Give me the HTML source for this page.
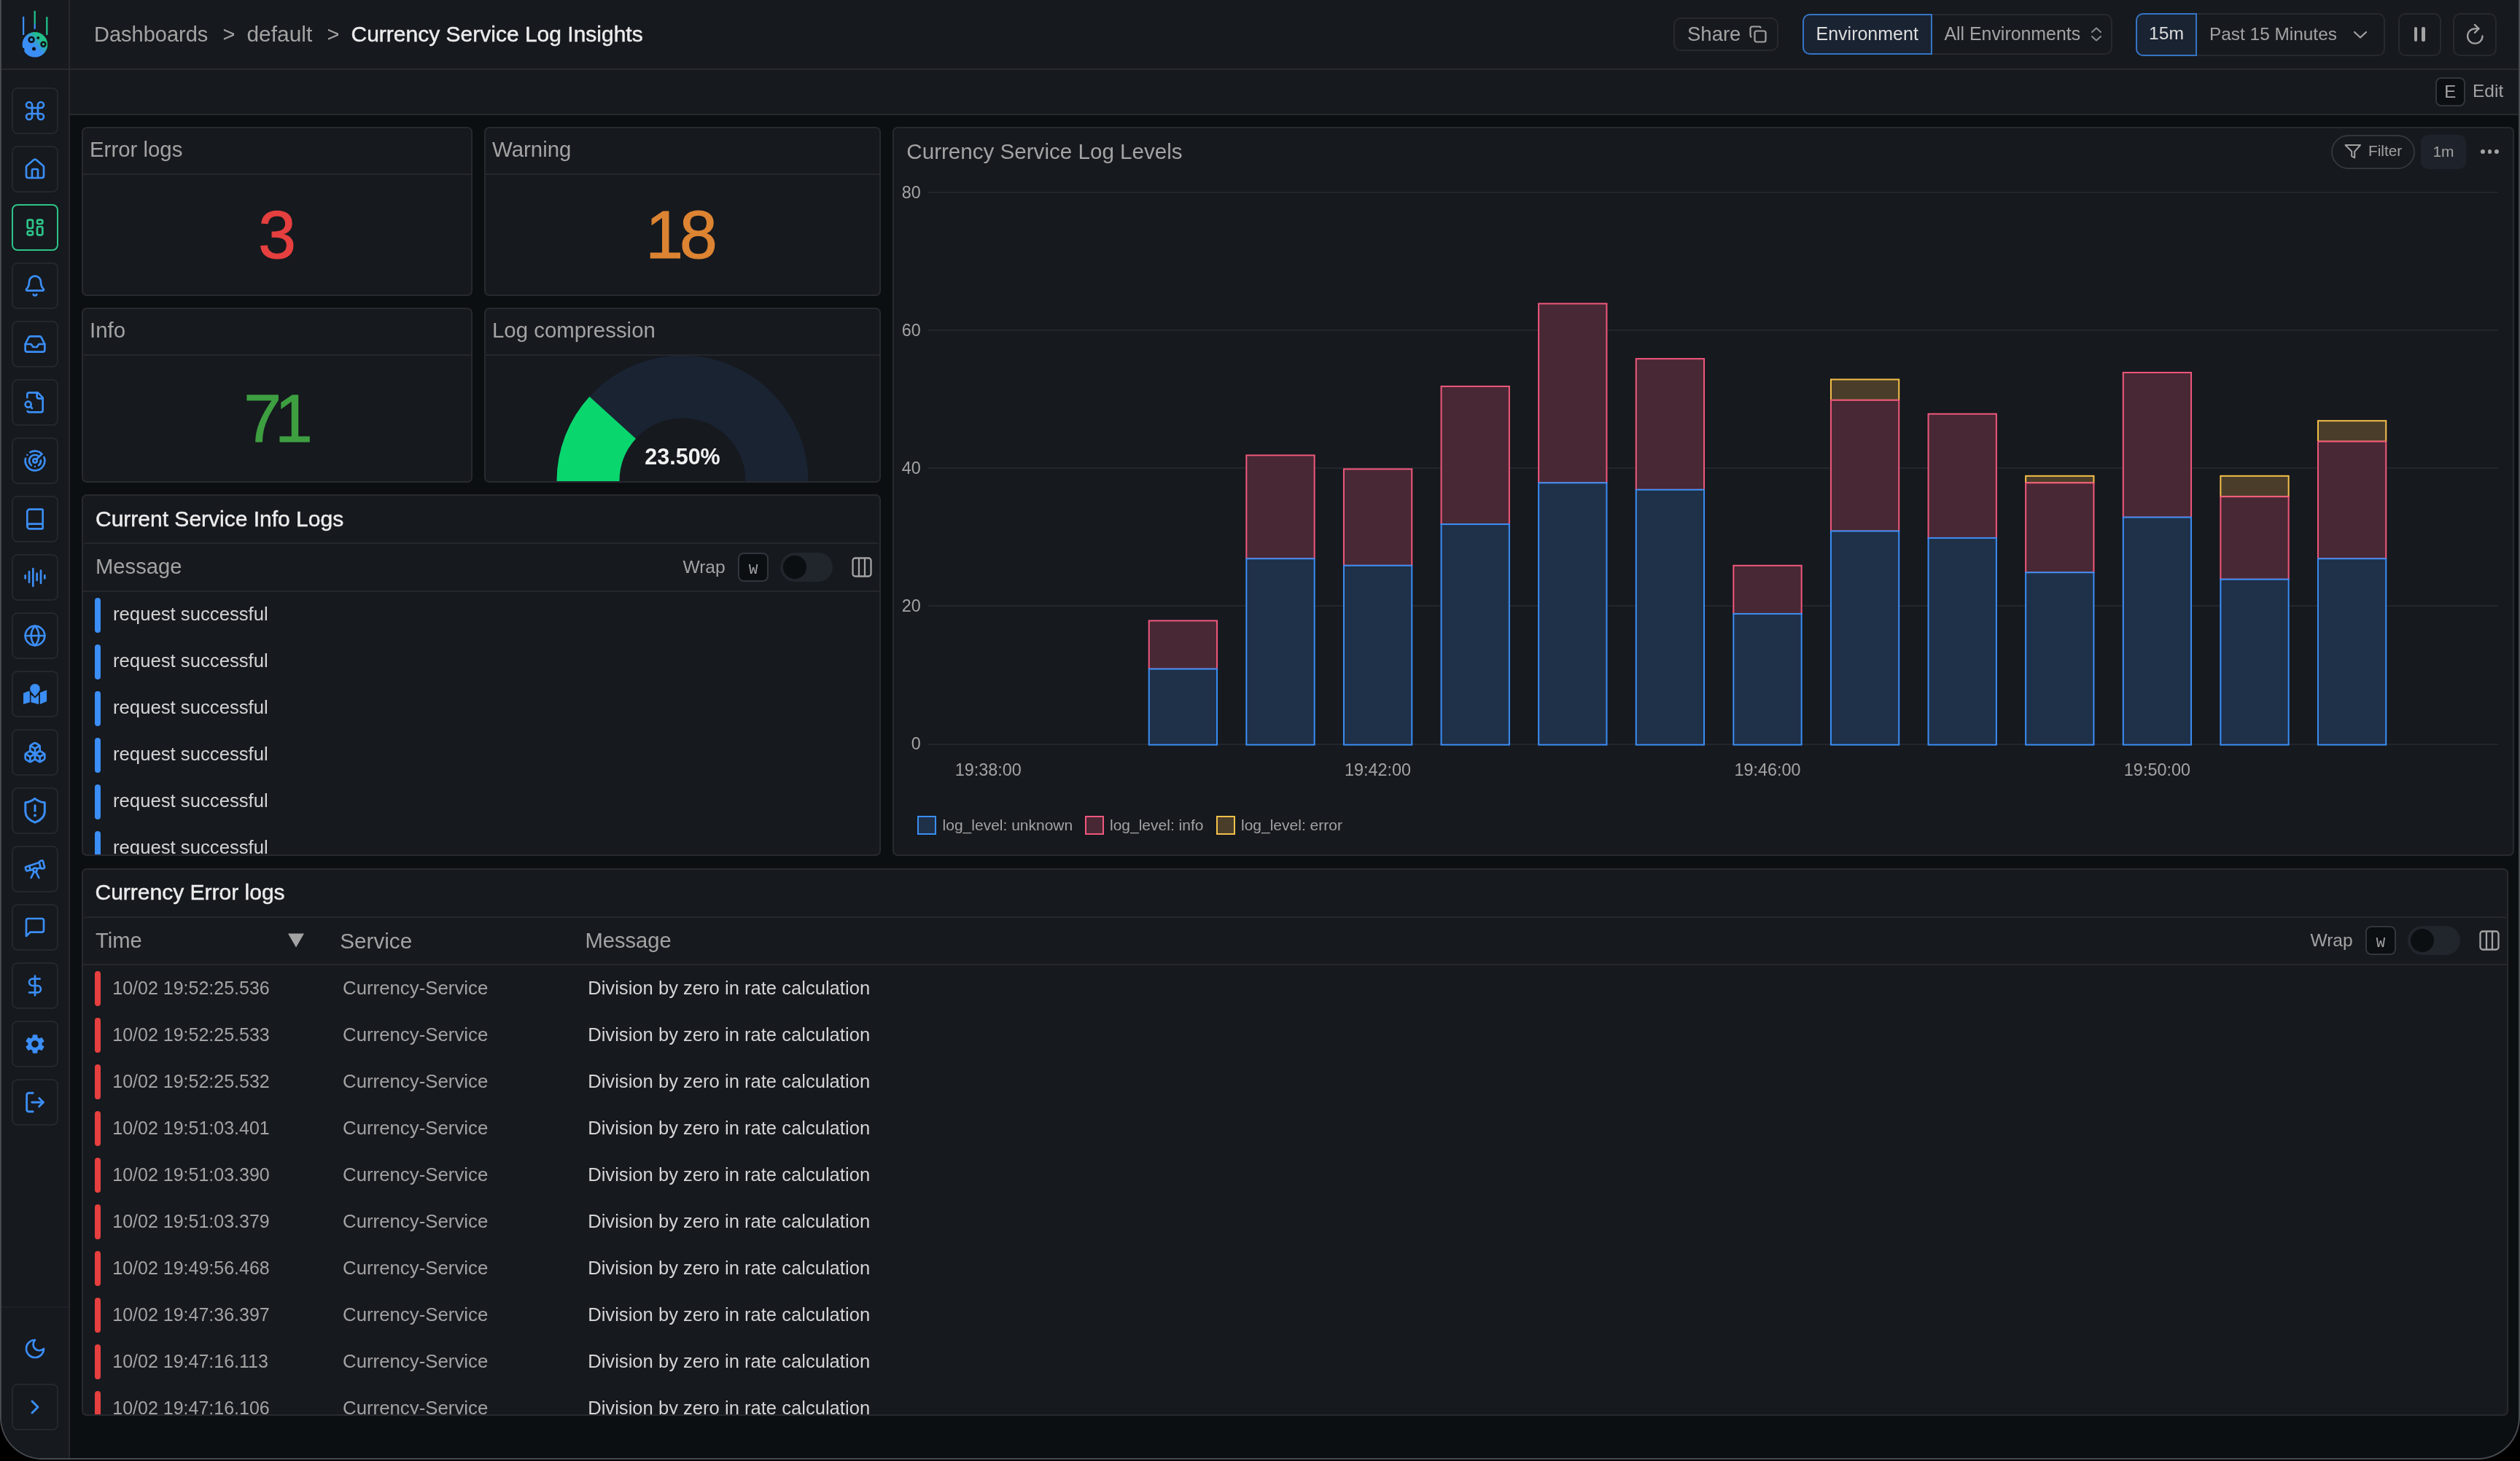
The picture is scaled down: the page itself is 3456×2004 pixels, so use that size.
<!DOCTYPE html>
<html><head><meta charset="utf-8"><title>Currency Service Log Insights</title>
<style>
html,body{margin:0;padding:0;width:3456px;height:2004px;overflow:hidden;background:#000;}
body{position:relative;font-family:"Liberation Sans",sans-serif;}
div,svg{box-sizing:content-box;}
</style></head><body>
<div style="position:absolute;left:0;top:-60px;width:3456px;height:2062px;box-sizing:border-box;border:2px solid #46494e;border-top:none;border-radius:0 0 58px 58px;overflow:hidden;background:#0b0f12;"><div style="position:absolute;left:-2px;top:60px;width:3456px;height:2004px;will-change:transform;"><div style="position:absolute;left:0px;top:0px;width:96px;height:2004px;background:#16191e;border-right:2px solid #27292e;box-sizing:border-box;"></div><div style="position:absolute;left:96px;top:0px;width:3360px;height:96px;background:#16191e;"></div><div style="position:absolute;left:0px;top:94px;width:3456px;height:2px;background:#27292e;"></div><div style="position:absolute;left:96px;top:96px;width:3360px;height:62px;background:#16191e;"></div><div style="position:absolute;left:96px;top:156px;width:3360px;height:2px;background:#27292e;"></div><svg style="position:absolute;left:20px;top:10px;" width="56" height="72" viewBox="0 0 56 72">
<defs>
 <linearGradient id="lg" gradientUnits="userSpaceOnUse" x1="12" y1="66" x2="44" y2="36">
  <stop offset="0.45" stop-color="#3b8ef5"/><stop offset="0.62" stop-color="#2fa4c0"/><stop offset="0.75" stop-color="#21c08a"/>
 </linearGradient>
 <linearGradient id="ln2" gradientUnits="userSpaceOnUse" x1="0" y1="5" x2="0" y2="30"><stop offset="0.68" stop-color="#21c08a"/><stop offset="0.74" stop-color="#3b8ef5"/></linearGradient>
</defs>
<line x1="12.1" y1="12.8" x2="12.1" y2="38" stroke="#3b8ef5" stroke-width="2.3"/>
<line x1="27.7" y1="4.9" x2="27.7" y2="29.8" stroke="url(#ln2)" stroke-width="2.3"/>
<line x1="44.3" y1="13.1" x2="44.3" y2="38" stroke="#21c08a" stroke-width="2.3"/>
<circle cx="27.9" cy="51.2" r="17.3" fill="url(#lg)"/>
<circle cx="23.1" cy="44.4" r="3.4" fill="none" stroke="#111" stroke-width="2.6"/>
<circle cx="32.3" cy="41.9" r="1.9" fill="#111"/>
<circle cx="39.5" cy="50.8" r="3.0" fill="none" stroke="#111" stroke-width="2.4"/>
<circle cx="26.5" cy="57" r="2.5" fill="#111"/>
<circle cx="11" cy="58" r="2.6" fill="#16191e"/>
</svg><div style="position:absolute;left:16px;top:120px;width:64px;height:64px;border:2px solid #24272c;border-radius:8px;box-sizing:border-box;"></div><svg style="position:absolute;left:32.0px;top:136.0px;color:#3b8ef5" width="32" height="32" viewBox="0 0 24 24" fill="none" stroke="#3b8ef5" stroke-width="2" stroke-linecap="round" stroke-linejoin="round"><path d="M15 6v12a3 3 0 1 0 3-3H6a3 3 0 1 0 3 3V6a3 3 0 1 0-3 3h12a3 3 0 1 0-3-3"/></svg><div style="position:absolute;left:16px;top:200px;width:64px;height:64px;border:2px solid #24272c;border-radius:8px;box-sizing:border-box;"></div><svg style="position:absolute;left:32.0px;top:216.0px;color:#3b8ef5" width="32" height="32" viewBox="0 0 24 24" fill="none" stroke="#3b8ef5" stroke-width="2" stroke-linecap="round" stroke-linejoin="round"><path d="M15 21v-8a1 1 0 0 0-1-1h-4a1 1 0 0 0-1 1v8"/><path d="M3 10a2 2 0 0 1 .709-1.528l7-5.999a2 2 0 0 1 2.582 0l7 5.999A2 2 0 0 1 21 10v9a2 2 0 0 1-2 2H5a2 2 0 0 1-2-2z"/></svg><div style="position:absolute;left:16px;top:280px;width:64px;height:64px;border:2px solid #2ec48a;border-radius:8px;box-sizing:border-box;"></div><svg style="position:absolute;left:32.0px;top:296.0px;color:#2ec48a" width="32" height="32" viewBox="0 0 24 24" fill="none" stroke="#2ec48a" stroke-width="2" stroke-linecap="round" stroke-linejoin="round"><rect width="5.5" height="8.5" x="4.25" y="4.25" rx="1.5"/><rect width="5.5" height="4" x="14.25" y="4.25" rx="1.5"/><rect width="5.5" height="8.5" x="14.25" y="11.25" rx="1.5"/><rect width="5.5" height="4" x="4.25" y="15.75" rx="1.5"/></svg><div style="position:absolute;left:16px;top:360px;width:64px;height:64px;border:2px solid #24272c;border-radius:8px;box-sizing:border-box;"></div><svg style="position:absolute;left:32.0px;top:376.0px;color:#3b8ef5" width="32" height="32" viewBox="0 0 24 24" fill="none" stroke="#3b8ef5" stroke-width="2" stroke-linecap="round" stroke-linejoin="round"><path d="M10.268 21a2 2 0 0 0 3.464 0"/><path d="M3.262 15.326A1 1 0 0 0 4 17h16a1 1 0 0 0 .74-1.673C19.41 13.956 18 12.499 18 8A6 6 0 0 0 6 8c0 4.499-1.411 5.956-2.738 7.326"/></svg><div style="position:absolute;left:16px;top:440px;width:64px;height:64px;border:2px solid #24272c;border-radius:8px;box-sizing:border-box;"></div><svg style="position:absolute;left:32.0px;top:456.0px;color:#3b8ef5" width="32" height="32" viewBox="0 0 24 24" fill="none" stroke="#3b8ef5" stroke-width="2" stroke-linecap="round" stroke-linejoin="round"><polyline points="22 12 16 12 14 15 10 15 8 12 2 12"/><path d="M5.45 5.11 2 12v6a2 2 0 0 0 2 2h16a2 2 0 0 0 2-2v-6l-3.45-6.89A2 2 0 0 0 16.76 4H7.24a2 2 0 0 0-1.79 1.11z"/></svg><div style="position:absolute;left:16px;top:520px;width:64px;height:64px;border:2px solid #24272c;border-radius:8px;box-sizing:border-box;"></div><svg style="position:absolute;left:32.0px;top:536.0px;color:#3b8ef5" width="32" height="32" viewBox="0 0 24 24" fill="none" stroke="#3b8ef5" stroke-width="2" stroke-linecap="round" stroke-linejoin="round"><path d="M14 2v4a2 2 0 0 0 2 2h4"/><path d="M4.268 21a2 2 0 0 0 1.727 1H18a2 2 0 0 0 2-2V7l-5-5H6a2 2 0 0 0-2 2v3"/><path d="m9 18-1.5-1.5"/><circle cx="5" cy="14" r="3"/></svg><div style="position:absolute;left:16px;top:600px;width:64px;height:64px;border:2px solid #24272c;border-radius:8px;box-sizing:border-box;"></div><svg style="position:absolute;left:32.0px;top:616.0px;color:#3b8ef5" width="32" height="32" viewBox="0 0 24 24" fill="none" stroke="#3b8ef5" stroke-width="2" stroke-linecap="round" stroke-linejoin="round"><path d="M19.07 4.93A10 10 0 0 0 6.99 3.34"/><path d="M4 6h.01"/><path d="M2.29 9.62A10 10 0 1 0 21.31 8.35"/><path d="M16.24 7.76A6 6 0 1 0 8.23 16.67"/><path d="M12 18h.01"/><path d="M17.99 11.66A6 6 0 0 1 15.77 16.67"/><circle cx="12" cy="12" r="2"/><path d="m13.41 10.59 5.66-5.66"/></svg><div style="position:absolute;left:16px;top:680px;width:64px;height:64px;border:2px solid #24272c;border-radius:8px;box-sizing:border-box;"></div><svg style="position:absolute;left:32.0px;top:696.0px;color:#3b8ef5" width="32" height="32" viewBox="0 0 24 24" fill="none" stroke="#3b8ef5" stroke-width="2" stroke-linecap="round" stroke-linejoin="round"><path d="M4 19.5v-15A2.5 2.5 0 0 1 6.5 2H19a1 1 0 0 1 1 1v18a1 1 0 0 1-1 1H6.5a1 1 0 0 1 0-5H20"/></svg><div style="position:absolute;left:16px;top:760px;width:64px;height:64px;border:2px solid #24272c;border-radius:8px;box-sizing:border-box;"></div><svg style="position:absolute;left:32.0px;top:776.0px;color:#3b8ef5" width="32" height="32" viewBox="0 0 24 24" fill="none" stroke="#3b8ef5" stroke-width="2" stroke-linecap="round" stroke-linejoin="round"><path d="M2 10v3"/><path d="M6 6v11"/><path d="M10 3v18"/><path d="M14 8v7"/><path d="M18 5v13"/><path d="M22 10v3"/></svg><div style="position:absolute;left:16px;top:840px;width:64px;height:64px;border:2px solid #24272c;border-radius:8px;box-sizing:border-box;"></div><svg style="position:absolute;left:32.0px;top:856.0px;color:#3b8ef5" width="32" height="32" viewBox="0 0 24 24" fill="none" stroke="#3b8ef5" stroke-width="2" stroke-linecap="round" stroke-linejoin="round"><circle cx="12" cy="12" r="10"/><path d="M12 2a14.5 14.5 0 0 0 0 20 14.5 14.5 0 0 0 0-20"/><path d="M2 12h20"/></svg><div style="position:absolute;left:16px;top:920px;width:64px;height:64px;border:2px solid #24272c;border-radius:8px;box-sizing:border-box;"></div><svg style="position:absolute;left:24px;top:928px;" width="48" height="48" viewBox="0 0 48 48"><g fill="#3b8ef5"><path d="M8.05 22.7 L16.9 19.2 L16.9 35.3 L8.05 38.1 Z"/><path d="M18.4 25 L24.3 28.9 L29.1 25 L29.1 38.1 L18.4 35.2 Z"/><path d="M30.9 22 L40.1 18.6 L40.1 34 L30.9 38.1 Z"/><path d="M18.3 21.8 A7.6 7.6 0 1 1 29.7 21.8 L24 28.6 Z" stroke="#16191e" stroke-width="1.6"/></g></svg><div style="position:absolute;left:16px;top:1000px;width:64px;height:64px;border:2px solid #24272c;border-radius:8px;box-sizing:border-box;"></div><svg style="position:absolute;left:32.0px;top:1016.0px;color:#3b8ef5" width="32" height="32" viewBox="0 0 24 24" fill="none" stroke="#3b8ef5" stroke-width="2" stroke-linecap="round" stroke-linejoin="round"><path d="M2.97 12.92A2 2 0 0 0 2 14.63v3.24a2 2 0 0 0 .97 1.71l3 1.8a2 2 0 0 0 2.06 0L12 19v-5.5l-5-3-4.03 2.42Z"/><path d="m7 16.5-4.74-2.85"/><path d="m7 16.5 5-3"/><path d="M7 16.5v5.17"/><path d="M12 13.5V19l3.97 2.38a2 2 0 0 0 2.06 0l3-1.8a2 2 0 0 0 .97-1.71v-3.24a2 2 0 0 0-.97-1.71L17 10.5l-5 3Z"/><path d="m17 16.5-5-3"/><path d="m17 16.5 4.74-2.85"/><path d="M17 16.5v5.17"/><path d="M7.97 4.42A2 2 0 0 0 7 6.13v4.37l5 3 5-3V6.13a2 2 0 0 0-.97-1.71l-3-1.8a2 2 0 0 0-2.06 0l-3 1.8Z"/><path d="M12 8 7.26 5.15"/><path d="m12 8 4.74-2.85"/><path d="M12 13.5V8"/></svg><div style="position:absolute;left:16px;top:1080px;width:64px;height:64px;border:2px solid #24272c;border-radius:8px;box-sizing:border-box;"></div><svg style="position:absolute;left:24px;top:1088px;" width="48" height="48" viewBox="0 0 48 48"><g fill="none" stroke="#3b8ef5" stroke-width="3" stroke-linecap="round" stroke-linejoin="round"><path d="M23.65 7.4 Q17.5 12.4 10.84 12.8 L10.84 26 Q11.5 35.5 24 40.2 Q36.5 35.5 37.3 26 L37.3 12.8 Q30.3 12.4 23.65 7.4 Z"/><path d="M24 16.8 V24.3"/></g><circle cx="24" cy="30.5" r="1.9" fill="#3b8ef5"/></svg><div style="position:absolute;left:16px;top:1160px;width:64px;height:64px;border:2px solid #24272c;border-radius:8px;box-sizing:border-box;"></div><svg style="position:absolute;left:32.0px;top:1176.0px;color:#3b8ef5" width="32" height="32" viewBox="0 0 24 24" fill="none" stroke="#3b8ef5" stroke-width="2" stroke-linecap="round" stroke-linejoin="round"><path d="m10.065 12.493-6.18 1.318a.934.934 0 0 1-1.108-.702l-.537-2.15a1.07 1.07 0 0 1 .691-1.265l13.504-4.44"/><path d="m13.56 11.747 4.332-.924"/><path d="m16 21-3.105-6.21"/><path d="M16.485 5.94a2 2 0 0 1 1.455-2.425l1.09-.272a1 1 0 0 1 1.212.727l1.515 6.06a1 1 0 0 1-.727 1.213l-1.09.272a2 2 0 0 1-2.425-1.455z"/><path d="m6.158 8.633 1.114 4.456"/><path d="m8 21 3.105-6.21"/><circle cx="12" cy="13" r="2"/></svg><div style="position:absolute;left:16px;top:1240px;width:64px;height:64px;border:2px solid #24272c;border-radius:8px;box-sizing:border-box;"></div><svg style="position:absolute;left:32.0px;top:1256.0px;color:#3b8ef5" width="32" height="32" viewBox="0 0 24 24" fill="none" stroke="#3b8ef5" stroke-width="2" stroke-linecap="round" stroke-linejoin="round"><path d="M21 15a2 2 0 0 1-2 2H7l-4 4V5a2 2 0 0 1 2-2h14a2 2 0 0 1 2 2z"/></svg><div style="position:absolute;left:16px;top:1320px;width:64px;height:64px;border:2px solid #24272c;border-radius:8px;box-sizing:border-box;"></div><svg style="position:absolute;left:32.0px;top:1336.0px;color:#3b8ef5" width="32" height="32" viewBox="0 0 24 24" fill="none" stroke="#3b8ef5" stroke-width="2" stroke-linecap="round" stroke-linejoin="round"><line x1="12" x2="12" y1="2" y2="22"/><path d="M17 5H9.5a3.5 3.5 0 0 0 0 7h5a3.5 3.5 0 0 1 0 7H6"/></svg><div style="position:absolute;left:16px;top:1400px;width:64px;height:64px;border:2px solid #24272c;border-radius:8px;box-sizing:border-box;"></div><svg style="position:absolute;left:32.0px;top:1416.0px;color:#3b8ef5" width="32" height="32" viewBox="0 0 24 24" fill="none" stroke="#3b8ef5" stroke-width="2" stroke-linecap="round" stroke-linejoin="round"><path fill="currentColor" stroke="none" d="M19.14 12.94c.04-.3.06-.61.06-.94 0-.32-.02-.64-.07-.94l2.03-1.58a.49.49 0 0 0 .12-.61l-1.92-3.32a.488.488 0 0 0-.59-.22l-2.39.96c-.5-.38-1.03-.7-1.62-.94l-.36-2.54a.484.484 0 0 0-.48-.41h-3.84c-.24 0-.43.17-.47.41l-.36 2.54c-.59.24-1.13.57-1.62.94l-2.39-.96c-.22-.08-.47 0-.59.22L2.74 8.87c-.12.21-.08.47.12.61l2.03 1.58c-.05.3-.09.63-.09.94s.02.64.07.94l-2.03 1.58a.49.49 0 0 0-.12.61l1.92 3.32c.12.22.37.29.59.22l2.39-.96c.5.38 1.03.7 1.62.94l.36 2.54c.05.24.24.41.48.41h3.84c.24 0 .44-.17.47-.41l.36-2.54c.59-.24 1.13-.56 1.62-.94l2.39.96c.22.08.47 0 .59-.22l1.92-3.32c.12-.22.07-.47-.12-.61l-2.01-1.58zM12 15.6c-1.98 0-3.6-1.62-3.6-3.6s1.62-3.6 3.6-3.6 3.6 1.62 3.6 3.6-1.62 3.6-3.6 3.6z"/></svg><div style="position:absolute;left:16px;top:1480px;width:64px;height:64px;border:2px solid #24272c;border-radius:8px;box-sizing:border-box;"></div><svg style="position:absolute;left:31.0px;top:1495.0px;color:#3b8ef5" width="34" height="34" viewBox="0 0 24 24" fill="none" stroke="#3b8ef5" stroke-width="2" stroke-linecap="round" stroke-linejoin="round"><path d="M10 3H6a2 2 0 0 0-2 2v14c0 1.1.9 2 2 2h4"/><path d="M20 12H9"/><path d="m16 16 4-4-4-4"/></svg><div style="position:absolute;left:2px;top:1792px;width:92px;height:2px;background:#1d2026;"></div><svg style="position:absolute;left:32.0px;top:1834.0px;color:#3b8ef5" width="32" height="32" viewBox="0 0 24 24" fill="none" stroke="#3b8ef5" stroke-width="2" stroke-linecap="round" stroke-linejoin="round"><path d="M12 3a6 6 0 0 0 9 9 9 9 0 1 1-9-9Z"/></svg><div style="position:absolute;left:16px;top:1898px;width:64px;height:64px;border:2px solid #24272c;border-radius:8px;box-sizing:border-box;"></div><svg style="position:absolute;left:32.0px;top:1914.0px;color:#3b8ef5" width="32" height="32" viewBox="0 0 24 24" fill="none" stroke="#3b8ef5" stroke-width="2.2" stroke-linecap="round" stroke-linejoin="round"><path d="m9 18 6-6-6-6"/></svg><div style="position:absolute;top:33.05px;font-size:29px;line-height:29px;color:#a3a3a3;font-weight:400;white-space:pre;left:129px;">Dashboards</div><div style="position:absolute;top:33.05px;font-size:29px;line-height:29px;color:#a3a3a3;font-weight:400;white-space:pre;left:305.5px;">&gt;</div><div style="position:absolute;top:32.29px;font-size:29.9px;line-height:29.9px;color:#a3a3a3;font-weight:400;white-space:pre;left:338.5px;">default</div><div style="position:absolute;top:33.05px;font-size:29px;line-height:29px;color:#a3a3a3;font-weight:400;white-space:pre;left:448.5px;">&gt;</div><div style="position:absolute;top:32.20px;font-size:30px;line-height:30px;color:#ececec;font-weight:400;white-space:pre;-webkit-text-stroke:0.45px #ececec;left:481.5px;">Currency Service Log Insights</div><div style="position:absolute;left:2295px;top:23.5px;width:144px;height:46.5px;border:2px solid #27292e;border-radius:10px;box-sizing:border-box;"></div><div style="position:absolute;top:32.72px;font-size:27.5px;line-height:27.5px;color:#a3a3a3;font-weight:400;white-space:pre;left:2314px;">Share</div><svg style="position:absolute;left:2398px;top:34px;" width="26" height="26" viewBox="0 0 26 26"><g fill="none" stroke="#a3a3a3" stroke-width="2.2" stroke-linecap="round" stroke-linejoin="round"><rect x="8.5" y="8.5" width="15" height="15" rx="2.5"/><path d="M3.5 16.5 A2.5 2.5 0 0 1 2.5 14.5 V5 A2.5 2.5 0 0 1 5 2.5 H14.5 A2.5 2.5 0 0 1 16.5 3.5"/></g></svg><div style="position:absolute;left:2472px;top:19px;width:425px;height:56px;border:2px solid #27292e;border-radius:10px;box-sizing:border-box;"></div><div style="position:absolute;left:2472px;top:19px;width:178px;height:56px;background:#1a2332;border:2px solid #3574c4;border-radius:10px 0 0 10px;box-sizing:border-box;"></div><div style="position:absolute;top:34.04px;font-size:25px;line-height:25px;color:#dcdcdc;font-weight:400;white-space:pre;left:2490.5px;">Environment</div><div style="position:absolute;top:34.02px;font-size:24.9px;line-height:24.9px;color:#a3a3a3;font-weight:400;white-space:pre;left:2666.4px;">All Environments</div><svg style="position:absolute;left:2866px;top:36px;" width="18" height="22" viewBox="0 0 18 22"><g fill="none" stroke="#8a8d92" stroke-width="2" stroke-linecap="round" stroke-linejoin="round"><path d="M3 8 L9 2.5 L15 8"/><path d="M3 14 L9 19.5 L15 14"/></g></svg><div style="position:absolute;left:2929px;top:17.5px;width:342px;height:59.0px;border:2px solid #27292e;border-radius:10px;box-sizing:border-box;"></div><div style="position:absolute;left:2929px;top:17.5px;width:84px;height:59.0px;background:#1a2332;border:2px solid #3574c4;border-radius:10px 0 0 10px;box-sizing:border-box;"></div><div style="position:absolute;top:34.39px;font-size:24.7px;line-height:24.7px;color:#dcdcdc;font-weight:400;white-space:pre;left:1971px;width:2000px;text-align:center;">15m</div><div style="position:absolute;top:34.65px;font-size:24.4px;line-height:24.4px;color:#a3a3a3;font-weight:400;white-space:pre;left:3030px;">Past 15 Minutes</div><svg style="position:absolute;left:3226px;top:40px;" width="22" height="16" viewBox="0 0 22 16"><path d="M3 4 L11 11.5 L19 4" fill="none" stroke="#a3a3a3" stroke-width="2.2" stroke-linecap="round" stroke-linejoin="round"/></svg><div style="position:absolute;left:3288.5px;top:17.5px;width:59.0px;height:59.0px;border:2px solid #27292e;border-radius:10px;box-sizing:border-box;"></div><div style="position:absolute;left:3310.5px;top:37px;width:4.5px;height:20px;background:#a3a3a3;border-radius:2px;"></div><div style="position:absolute;left:3321px;top:37px;width:4.5px;height:20px;background:#a3a3a3;border-radius:2px;"></div><div style="position:absolute;left:3364px;top:17.5px;width:60px;height:59.0px;border:2px solid #27292e;border-radius:10px;box-sizing:border-box;"></div><svg style="position:absolute;left:3374px;top:27px;" width="40" height="40" viewBox="0 0 40 40"><g fill="none" stroke="#a3a3a3" stroke-width="2.3" stroke-linecap="round" stroke-linejoin="round"><path d="M30.5 22.5 A10.2 10.2 0 1 1 20.3 12.3 L25.5 12.3"/><path d="M19.9 6.9 L25.5 12.3 L19.9 17.9"/></g></svg><div style="position:absolute;left:3339.5px;top:106px;width:41.5px;height:40px;background:#0b0f12;border:2px solid #33363c;border-radius:8px;box-sizing:border-box;"></div><div style="position:absolute;top:113.68px;font-size:24px;line-height:24px;color:#a3a3a3;font-weight:400;white-space:pre;left:2360.2px;width:2000px;text-align:center;">E</div><div style="position:absolute;top:113.46px;font-size:24.5px;line-height:24.5px;color:#a3a3a3;font-weight:400;white-space:pre;left:3391px;">Edit</div><div style="position:absolute;left:112px;top:174px;width:536px;height:232px;background:#16191e;border:2px solid #27292e;border-radius:7px;box-sizing:border-box;"></div><div style="position:absolute;left:114px;top:238px;width:532px;height:2px;background:#25272c;"></div><div style="position:absolute;top:190.11px;font-size:29.4px;line-height:29.4px;color:#a3a3a3;font-weight:400;white-space:pre;left:123px;">Error logs</div><div style="position:absolute;left:664px;top:174px;width:544px;height:232px;background:#16191e;border:2px solid #27292e;border-radius:7px;box-sizing:border-box;"></div><div style="position:absolute;left:666px;top:238px;width:540px;height:2px;background:#25272c;"></div><div style="position:absolute;top:190.11px;font-size:29.4px;line-height:29.4px;color:#a3a3a3;font-weight:400;white-space:pre;left:675px;">Warning</div><div style="position:absolute;left:112px;top:422px;width:536px;height:240px;background:#16191e;border:2px solid #27292e;border-radius:7px;box-sizing:border-box;"></div><div style="position:absolute;left:114px;top:486px;width:532px;height:2px;background:#25272c;"></div><div style="position:absolute;top:438.11px;font-size:29.4px;line-height:29.4px;color:#a3a3a3;font-weight:400;white-space:pre;left:123px;">Info</div><div style="position:absolute;left:664px;top:422px;width:544px;height:240px;background:#16191e;border:2px solid #27292e;border-radius:7px;box-sizing:border-box;"></div><div style="position:absolute;left:666px;top:486px;width:540px;height:2px;background:#25272c;"></div><div style="position:absolute;top:438.11px;font-size:29.4px;line-height:29.4px;color:#a3a3a3;font-weight:400;white-space:pre;left:675px;">Log compression</div><div style="position:absolute;top:276.08px;font-size:93px;line-height:93px;color:#e5403f;font-weight:400;white-space:pre;-webkit-text-stroke:1.2px #e5403f;left:-620px;width:2000px;text-align:center;">3</div><div style="position:absolute;top:275.78px;font-size:93px;line-height:93px;color:#dd8433;font-weight:400;white-space:pre;-webkit-text-stroke:1.2px #dd8433;letter-spacing:-5px;left:-68px;width:2000px;text-align:center;">18</div><div style="position:absolute;top:528.08px;font-size:93px;line-height:93px;color:#3e9f41;font-weight:400;white-space:pre;-webkit-text-stroke:1.2px #3e9f41;letter-spacing:-9px;left:-623px;width:2000px;text-align:center;">71</div><div style="position:absolute;left:666px;top:488px;width:540px;height:172px;overflow:hidden;"><svg style="position:absolute;left:-666px;top:-488px" width="3456" height="1000"><path d="M763.5 660 A172.5 172.5 0 0 1 1108.5 660 L1022.5 660 A86.5 86.5 0 0 0 849.5 660 Z" fill="#1a2332"/><path d="M763.5 660 A172.5 172.5 0 0 1 808.41 543.91 L872.02 601.78 A86.5 86.5 0 0 0 849.5 660 Z" fill="#0ad66e"/></svg></div><div style="position:absolute;top:611.48px;font-size:30.5px;line-height:30.5px;color:#f2f2f2;font-weight:700;white-space:pre;left:-64px;width:2000px;text-align:center;">23.50%</div><div style="position:absolute;left:112px;top:678px;width:1096px;height:496px;background:#16191e;border:2px solid #27292e;border-radius:7px;box-sizing:border-box;"></div><div style="position:absolute;top:697.21px;font-size:30px;line-height:30px;color:#ececec;font-weight:400;white-space:pre;-webkit-text-stroke:0.45px #ececec;left:131px;">Current Service Info Logs</div><div style="position:absolute;left:112px;top:744px;width:1096px;height:430px;border-top:2px solid #25272c;border-radius:7px 7px 0 0;box-sizing:border-box;"></div><div style="position:absolute;top:763.28px;font-size:29.2px;line-height:29.2px;color:#a3a3a3;font-weight:400;white-space:pre;left:131px;">Message</div><div style="position:absolute;top:765.68px;font-size:24.6px;line-height:24.6px;color:#a3a3a3;font-weight:400;white-space:pre;left:936.4px;">Wrap</div><div style="position:absolute;left:1012.3px;top:758px;width:41.5px;height:40px;background:#0b0f12;border:2px solid #33363c;border-radius:8px;box-sizing:border-box;"></div><div style="position:absolute;top:771.65px;font-size:20.5px;line-height:20.5px;color:#a3a3a3;font-weight:400;white-space:pre;font-family:Liberation Mono,monospace;left:33.049999999999955px;width:2000px;text-align:center;">W</div><div style="position:absolute;left:1070.3px;top:758px;width:71.5px;height:40px;background:#21252c;border-radius:20px;"></div><div style="position:absolute;left:1074.3px;top:762px;width:32px;height:32px;border-radius:16px;background:#0b0f12;"></div><svg style="position:absolute;left:1168px;top:764px;" width="28" height="28" viewBox="0 0 28 28"><g fill="none" stroke="#a3a3a3" stroke-width="2.3"><rect x="1.5" y="1.5" width="25" height="25" rx="3.5"/><line x1="10" y1="1.5" x2="10" y2="26.5"/><line x1="18" y1="1.5" x2="18" y2="26.5"/></g></svg><div style="position:absolute;left:114px;top:810px;width:1092px;height:2px;background:#25272c;"></div><div style="position:absolute;left:114px;top:812px;width:1092px;height:360px;overflow:hidden;"><div style="position:absolute;left:16px;top:8.299999999999955px;width:8px;height:47.5px;border-radius:4px;background:#3b8ef5;"></div><div style="position:absolute;left:41px;top:18.44px;font-size:25.7px;line-height:25.7px;color:#d4d4d4;white-space:pre;">request successful</div><div style="position:absolute;left:16px;top:72.29999999999995px;width:8px;height:47.5px;border-radius:4px;background:#3b8ef5;"></div><div style="position:absolute;left:41px;top:82.44px;font-size:25.7px;line-height:25.7px;color:#d4d4d4;white-space:pre;">request successful</div><div style="position:absolute;left:16px;top:136.29999999999995px;width:8px;height:47.5px;border-radius:4px;background:#3b8ef5;"></div><div style="position:absolute;left:41px;top:146.44px;font-size:25.7px;line-height:25.7px;color:#d4d4d4;white-space:pre;">request successful</div><div style="position:absolute;left:16px;top:200.29999999999995px;width:8px;height:47.5px;border-radius:4px;background:#3b8ef5;"></div><div style="position:absolute;left:41px;top:210.44px;font-size:25.7px;line-height:25.7px;color:#d4d4d4;white-space:pre;">request successful</div><div style="position:absolute;left:16px;top:264.29999999999995px;width:8px;height:47.5px;border-radius:4px;background:#3b8ef5;"></div><div style="position:absolute;left:41px;top:274.44px;font-size:25.7px;line-height:25.7px;color:#d4d4d4;white-space:pre;">request successful</div><div style="position:absolute;left:16px;top:328.29999999999995px;width:8px;height:47.5px;border-radius:4px;background:#3b8ef5;"></div><div style="position:absolute;left:41px;top:338.44px;font-size:25.7px;line-height:25.7px;color:#d4d4d4;white-space:pre;">request successful</div></div><div style="position:absolute;left:1224px;top:174px;width:2224px;height:1000px;background:#16191e;border:2px solid #27292e;border-radius:7px;box-sizing:border-box;"></div><div style="position:absolute;top:192.84px;font-size:29.6px;line-height:29.6px;color:#a3a3a3;font-weight:400;white-space:pre;left:1243.3px;">Currency Service Log Levels</div><div style="position:absolute;left:3197px;top:184.5px;width:115px;height:47.0px;border:2px solid #33363c;border-radius:24px;box-sizing:border-box;"></div><svg style="position:absolute;left:3214px;top:196px;" width="26" height="24" viewBox="0 0 26 24"><path d="M2.5 3 H23 L15.2 11.8 V20.5 L11.2 18.2 V11.8 Z" fill="none" stroke="#a3a3a3" stroke-width="2" stroke-linejoin="round"/></svg><div style="position:absolute;top:197.39px;font-size:20.8px;line-height:20.8px;color:#a3a3a3;font-weight:400;white-space:pre;left:3248px;">Filter</div><div style="position:absolute;left:3320px;top:184.5px;width:62px;height:47.0px;background:#1e222a;border-radius:10px;"></div><div style="position:absolute;top:197.22px;font-size:21px;line-height:21px;color:#a3a3a3;font-weight:400;white-space:pre;left:2351px;width:2000px;text-align:center;">1m</div><div style="position:absolute;left:3402.2px;top:205.2px;width:5.6px;height:5.6px;border-radius:3px;background:#a3a3a3;"></div><div style="position:absolute;left:3411.7px;top:205.2px;width:5.6px;height:5.6px;border-radius:3px;background:#a3a3a3;"></div><div style="position:absolute;left:3421.2px;top:205.2px;width:5.6px;height:5.6px;border-radius:3px;background:#a3a3a3;"></div><div style="position:absolute;left:1273px;top:1020px;width:2153px;height:2px;background:#23262c;"></div><div style="position:absolute;top:1009.09px;font-size:23.4px;line-height:23.4px;color:#a3a3a3;font-weight:400;white-space:pre;left:-737.3px;width:2000px;text-align:right;">0</div><div style="position:absolute;left:1273px;top:830px;width:2153px;height:2px;background:#23262c;"></div><div style="position:absolute;top:819.99px;font-size:23.4px;line-height:23.4px;color:#a3a3a3;font-weight:400;white-space:pre;left:-737.3px;width:2000px;text-align:right;">20</div><div style="position:absolute;left:1273px;top:641px;width:2153px;height:2px;background:#23262c;"></div><div style="position:absolute;top:630.89px;font-size:23.4px;line-height:23.4px;color:#a3a3a3;font-weight:400;white-space:pre;left:-737.3px;width:2000px;text-align:right;">40</div><div style="position:absolute;left:1273px;top:452px;width:2153px;height:2px;background:#23262c;"></div><div style="position:absolute;top:441.79px;font-size:23.4px;line-height:23.4px;color:#a3a3a3;font-weight:400;white-space:pre;left:-737.3px;width:2000px;text-align:right;">60</div><div style="position:absolute;left:1273px;top:263px;width:2153px;height:2px;background:#23262c;"></div><div style="position:absolute;top:252.69px;font-size:23.4px;line-height:23.4px;color:#a3a3a3;font-weight:400;white-space:pre;left:-737.3px;width:2000px;text-align:right;">80</div><svg style="position:absolute;left:0;top:0" width="3456" height="1100"><rect x="1575.75" y="851.41" width="93.30" height="66.18" fill="#482834" stroke="#f0587c" stroke-width="2"/><rect x="1575.75" y="917.60" width="93.30" height="104.00" fill="#1f3049" stroke="#3b8ef5" stroke-width="2"/><rect x="1709.35" y="624.49" width="93.30" height="141.83" fill="#482834" stroke="#f0587c" stroke-width="2"/><rect x="1709.35" y="766.32" width="93.30" height="255.28" fill="#1f3049" stroke="#3b8ef5" stroke-width="2"/><rect x="1842.95" y="643.40" width="93.30" height="132.37" fill="#482834" stroke="#f0587c" stroke-width="2"/><rect x="1842.95" y="775.77" width="93.30" height="245.83" fill="#1f3049" stroke="#3b8ef5" stroke-width="2"/><rect x="1976.55" y="529.94" width="93.30" height="189.10" fill="#482834" stroke="#f0587c" stroke-width="2"/><rect x="1976.55" y="719.04" width="93.30" height="302.56" fill="#1f3049" stroke="#3b8ef5" stroke-width="2"/><rect x="2110.15" y="416.48" width="93.30" height="245.83" fill="#482834" stroke="#f0587c" stroke-width="2"/><rect x="2110.15" y="662.31" width="93.30" height="359.29" fill="#1f3049" stroke="#3b8ef5" stroke-width="2"/><rect x="2243.75" y="492.12" width="93.30" height="179.65" fill="#482834" stroke="#f0587c" stroke-width="2"/><rect x="2243.75" y="671.77" width="93.30" height="349.83" fill="#1f3049" stroke="#3b8ef5" stroke-width="2"/><rect x="2377.35" y="775.77" width="93.30" height="66.19" fill="#482834" stroke="#f0587c" stroke-width="2"/><rect x="2377.35" y="841.96" width="93.30" height="179.64" fill="#1f3049" stroke="#3b8ef5" stroke-width="2"/><rect x="2510.95" y="520.49" width="93.30" height="28.37" fill="#4a3e2a" stroke="#f5c04a" stroke-width="2"/><rect x="2510.95" y="548.85" width="93.30" height="179.64" fill="#482834" stroke="#f0587c" stroke-width="2"/><rect x="2510.95" y="728.50" width="93.30" height="293.11" fill="#1f3049" stroke="#3b8ef5" stroke-width="2"/><rect x="2644.55" y="567.76" width="93.30" height="170.19" fill="#482834" stroke="#f0587c" stroke-width="2"/><rect x="2644.55" y="737.95" width="93.30" height="283.65" fill="#1f3049" stroke="#3b8ef5" stroke-width="2"/><rect x="2778.15" y="652.86" width="93.30" height="9.45" fill="#4a3e2a" stroke="#f5c04a" stroke-width="2"/><rect x="2778.15" y="662.31" width="93.30" height="122.92" fill="#482834" stroke="#f0587c" stroke-width="2"/><rect x="2778.15" y="785.23" width="93.30" height="236.38" fill="#1f3049" stroke="#3b8ef5" stroke-width="2"/><rect x="2911.75" y="511.03" width="93.30" height="198.56" fill="#482834" stroke="#f0587c" stroke-width="2"/><rect x="2911.75" y="709.59" width="93.30" height="312.01" fill="#1f3049" stroke="#3b8ef5" stroke-width="2"/><rect x="3045.35" y="652.86" width="93.30" height="28.37" fill="#4a3e2a" stroke="#f5c04a" stroke-width="2"/><rect x="3045.35" y="681.22" width="93.30" height="113.46" fill="#482834" stroke="#f0587c" stroke-width="2"/><rect x="3045.35" y="794.68" width="93.30" height="226.92" fill="#1f3049" stroke="#3b8ef5" stroke-width="2"/><rect x="3178.95" y="577.22" width="93.30" height="28.37" fill="#4a3e2a" stroke="#f5c04a" stroke-width="2"/><rect x="3178.95" y="605.58" width="93.30" height="160.74" fill="#482834" stroke="#f0587c" stroke-width="2"/><rect x="3178.95" y="766.32" width="93.30" height="255.28" fill="#1f3049" stroke="#3b8ef5" stroke-width="2"/></svg><div style="position:absolute;top:1045.29px;font-size:23.4px;line-height:23.4px;color:#a3a3a3;font-weight:400;white-space:pre;left:355.20000000000005px;width:2000px;text-align:center;">19:38:00</div><div style="position:absolute;top:1045.29px;font-size:23.4px;line-height:23.4px;color:#a3a3a3;font-weight:400;white-space:pre;left:889.5999999999999px;width:2000px;text-align:center;">19:42:00</div><div style="position:absolute;top:1045.29px;font-size:23.4px;line-height:23.4px;color:#a3a3a3;font-weight:400;white-space:pre;left:1424.0px;width:2000px;text-align:center;">19:46:00</div><div style="position:absolute;top:1045.29px;font-size:23.4px;line-height:23.4px;color:#a3a3a3;font-weight:400;white-space:pre;left:1958.3999999999996px;width:2000px;text-align:center;">19:50:00</div><div style="position:absolute;left:1258px;top:1119px;width:26px;height:26px;background:#1f3049;border:2.5px solid #3b8ef5;box-sizing:border-box;"></div><div style="position:absolute;top:1121.12px;font-size:21px;line-height:21px;color:#a3a3a3;font-weight:400;white-space:pre;left:1292.6px;">log_level: unknown</div><div style="position:absolute;left:1488.3px;top:1119px;width:26.0px;height:26px;background:#482834;border:2.5px solid #f0587c;box-sizing:border-box;"></div><div style="position:absolute;top:1121.12px;font-size:21px;line-height:21px;color:#a3a3a3;font-weight:400;white-space:pre;left:1522px;">log_level: info</div><div style="position:absolute;left:1668px;top:1119px;width:26px;height:26px;background:#4a3e2a;border:2.5px solid #f5c04a;box-sizing:border-box;"></div><div style="position:absolute;top:1121.12px;font-size:21px;line-height:21px;color:#a3a3a3;font-weight:400;white-space:pre;left:1702px;">log_level: error</div><div style="position:absolute;left:112px;top:1191px;width:3328px;height:751px;background:#16191e;border:2px solid #27292e;border-radius:7px;box-sizing:border-box;"></div><div style="position:absolute;top:1209.40px;font-size:30px;line-height:30px;color:#ececec;font-weight:400;white-space:pre;-webkit-text-stroke:0.45px #ececec;left:130.5px;">Currency Error logs</div><div style="position:absolute;left:112px;top:1257px;width:3328px;height:685px;border-top:2px solid #25272c;border-radius:7px 7px 0 0;box-sizing:border-box;"></div><div style="position:absolute;top:1276.28px;font-size:29.2px;line-height:29.2px;color:#a3a3a3;font-weight:400;white-space:pre;left:131px;">Time</div><svg style="position:absolute;left:394px;top:1279px;" width="24" height="22" viewBox="0 0 24 22"><path d="M1 1.5 H23 L12 20.5 Z" fill="#a3a3a3"/></svg><div style="position:absolute;top:1275.86px;font-size:29.7px;line-height:29.7px;color:#a3a3a3;font-weight:400;white-space:pre;left:466.2px;">Service</div><div style="position:absolute;top:1276.28px;font-size:29.2px;line-height:29.2px;color:#a3a3a3;font-weight:400;white-space:pre;left:802.4px;">Message</div><div style="position:absolute;top:1277.68px;font-size:24.6px;line-height:24.6px;color:#a3a3a3;font-weight:400;white-space:pre;left:3168.4px;">Wrap</div><div style="position:absolute;left:3244.2px;top:1270px;width:41.5px;height:40px;background:#0b0f12;border:2px solid #33363c;border-radius:8px;box-sizing:border-box;"></div><div style="position:absolute;top:1283.65px;font-size:20.5px;line-height:20.5px;color:#a3a3a3;font-weight:400;white-space:pre;font-family:Liberation Mono,monospace;left:2264.95px;width:2000px;text-align:center;">W</div><div style="position:absolute;left:3302.2px;top:1270px;width:71.5px;height:40px;background:#21252c;border-radius:20px;"></div><div style="position:absolute;left:3306.2px;top:1274px;width:32px;height:32px;border-radius:16px;background:#0b0f12;"></div><svg style="position:absolute;left:3400px;top:1276px;" width="28" height="28" viewBox="0 0 28 28"><g fill="none" stroke="#a3a3a3" stroke-width="2.3"><rect x="1.5" y="1.5" width="25" height="25" rx="3.5"/><line x1="10" y1="1.5" x2="10" y2="26.5"/><line x1="18" y1="1.5" x2="18" y2="26.5"/></g></svg><div style="position:absolute;left:114px;top:1322px;width:3324px;height:2px;background:#25272c;"></div><div style="position:absolute;left:114px;top:1324px;width:3324px;height:616px;overflow:hidden;"><div style="position:absolute;left:16px;top:8px;width:8px;height:48px;border-radius:4px;background:#e5403f;"></div><div style="position:absolute;left:40.30000000000001px;top:19.34px;font-size:25px;line-height:25px;color:#a3a3a3;white-space:pre;">10/02 19:52:25.536</div><div style="position:absolute;left:356px;top:18.66px;font-size:25.8px;line-height:25.8px;color:#a3a3a3;white-space:pre;">Currency-Service</div><div style="position:absolute;left:692.2px;top:18.83px;font-size:25.6px;line-height:25.6px;color:#d4d4d4;white-space:pre;">Division by zero in rate calculation</div><div style="position:absolute;left:16px;top:72px;width:8px;height:48px;border-radius:4px;background:#e5403f;"></div><div style="position:absolute;left:40.30000000000001px;top:83.34px;font-size:25px;line-height:25px;color:#a3a3a3;white-space:pre;">10/02 19:52:25.533</div><div style="position:absolute;left:356px;top:82.66px;font-size:25.8px;line-height:25.8px;color:#a3a3a3;white-space:pre;">Currency-Service</div><div style="position:absolute;left:692.2px;top:82.83px;font-size:25.6px;line-height:25.6px;color:#d4d4d4;white-space:pre;">Division by zero in rate calculation</div><div style="position:absolute;left:16px;top:136px;width:8px;height:48px;border-radius:4px;background:#e5403f;"></div><div style="position:absolute;left:40.30000000000001px;top:147.34px;font-size:25px;line-height:25px;color:#a3a3a3;white-space:pre;">10/02 19:52:25.532</div><div style="position:absolute;left:356px;top:146.66px;font-size:25.8px;line-height:25.8px;color:#a3a3a3;white-space:pre;">Currency-Service</div><div style="position:absolute;left:692.2px;top:146.83px;font-size:25.6px;line-height:25.6px;color:#d4d4d4;white-space:pre;">Division by zero in rate calculation</div><div style="position:absolute;left:16px;top:200px;width:8px;height:48px;border-radius:4px;background:#e5403f;"></div><div style="position:absolute;left:40.30000000000001px;top:211.34px;font-size:25px;line-height:25px;color:#a3a3a3;white-space:pre;">10/02 19:51:03.401</div><div style="position:absolute;left:356px;top:210.66px;font-size:25.8px;line-height:25.8px;color:#a3a3a3;white-space:pre;">Currency-Service</div><div style="position:absolute;left:692.2px;top:210.83px;font-size:25.6px;line-height:25.6px;color:#d4d4d4;white-space:pre;">Division by zero in rate calculation</div><div style="position:absolute;left:16px;top:264px;width:8px;height:48px;border-radius:4px;background:#e5403f;"></div><div style="position:absolute;left:40.30000000000001px;top:275.34px;font-size:25px;line-height:25px;color:#a3a3a3;white-space:pre;">10/02 19:51:03.390</div><div style="position:absolute;left:356px;top:274.66px;font-size:25.8px;line-height:25.8px;color:#a3a3a3;white-space:pre;">Currency-Service</div><div style="position:absolute;left:692.2px;top:274.83px;font-size:25.6px;line-height:25.6px;color:#d4d4d4;white-space:pre;">Division by zero in rate calculation</div><div style="position:absolute;left:16px;top:328px;width:8px;height:48px;border-radius:4px;background:#e5403f;"></div><div style="position:absolute;left:40.30000000000001px;top:339.34px;font-size:25px;line-height:25px;color:#a3a3a3;white-space:pre;">10/02 19:51:03.379</div><div style="position:absolute;left:356px;top:338.66px;font-size:25.8px;line-height:25.8px;color:#a3a3a3;white-space:pre;">Currency-Service</div><div style="position:absolute;left:692.2px;top:338.83px;font-size:25.6px;line-height:25.6px;color:#d4d4d4;white-space:pre;">Division by zero in rate calculation</div><div style="position:absolute;left:16px;top:392px;width:8px;height:48px;border-radius:4px;background:#e5403f;"></div><div style="position:absolute;left:40.30000000000001px;top:403.34px;font-size:25px;line-height:25px;color:#a3a3a3;white-space:pre;">10/02 19:49:56.468</div><div style="position:absolute;left:356px;top:402.66px;font-size:25.8px;line-height:25.8px;color:#a3a3a3;white-space:pre;">Currency-Service</div><div style="position:absolute;left:692.2px;top:402.83px;font-size:25.6px;line-height:25.6px;color:#d4d4d4;white-space:pre;">Division by zero in rate calculation</div><div style="position:absolute;left:16px;top:456px;width:8px;height:48px;border-radius:4px;background:#e5403f;"></div><div style="position:absolute;left:40.30000000000001px;top:467.34px;font-size:25px;line-height:25px;color:#a3a3a3;white-space:pre;">10/02 19:47:36.397</div><div style="position:absolute;left:356px;top:466.66px;font-size:25.8px;line-height:25.8px;color:#a3a3a3;white-space:pre;">Currency-Service</div><div style="position:absolute;left:692.2px;top:466.83px;font-size:25.6px;line-height:25.6px;color:#d4d4d4;white-space:pre;">Division by zero in rate calculation</div><div style="position:absolute;left:16px;top:520px;width:8px;height:48px;border-radius:4px;background:#e5403f;"></div><div style="position:absolute;left:40.30000000000001px;top:531.34px;font-size:25px;line-height:25px;color:#a3a3a3;white-space:pre;">10/02 19:47:16.113</div><div style="position:absolute;left:356px;top:530.66px;font-size:25.8px;line-height:25.8px;color:#a3a3a3;white-space:pre;">Currency-Service</div><div style="position:absolute;left:692.2px;top:530.83px;font-size:25.6px;line-height:25.6px;color:#d4d4d4;white-space:pre;">Division by zero in rate calculation</div><div style="position:absolute;left:16px;top:584px;width:8px;height:48px;border-radius:4px;background:#e5403f;"></div><div style="position:absolute;left:40.30000000000001px;top:595.34px;font-size:25px;line-height:25px;color:#a3a3a3;white-space:pre;">10/02 19:47:16.106</div><div style="position:absolute;left:356px;top:594.66px;font-size:25.8px;line-height:25.8px;color:#a3a3a3;white-space:pre;">Currency-Service</div><div style="position:absolute;left:692.2px;top:594.83px;font-size:25.6px;line-height:25.6px;color:#d4d4d4;white-space:pre;">Division by zero in rate calculation</div></div></div></div>
</body></html>
